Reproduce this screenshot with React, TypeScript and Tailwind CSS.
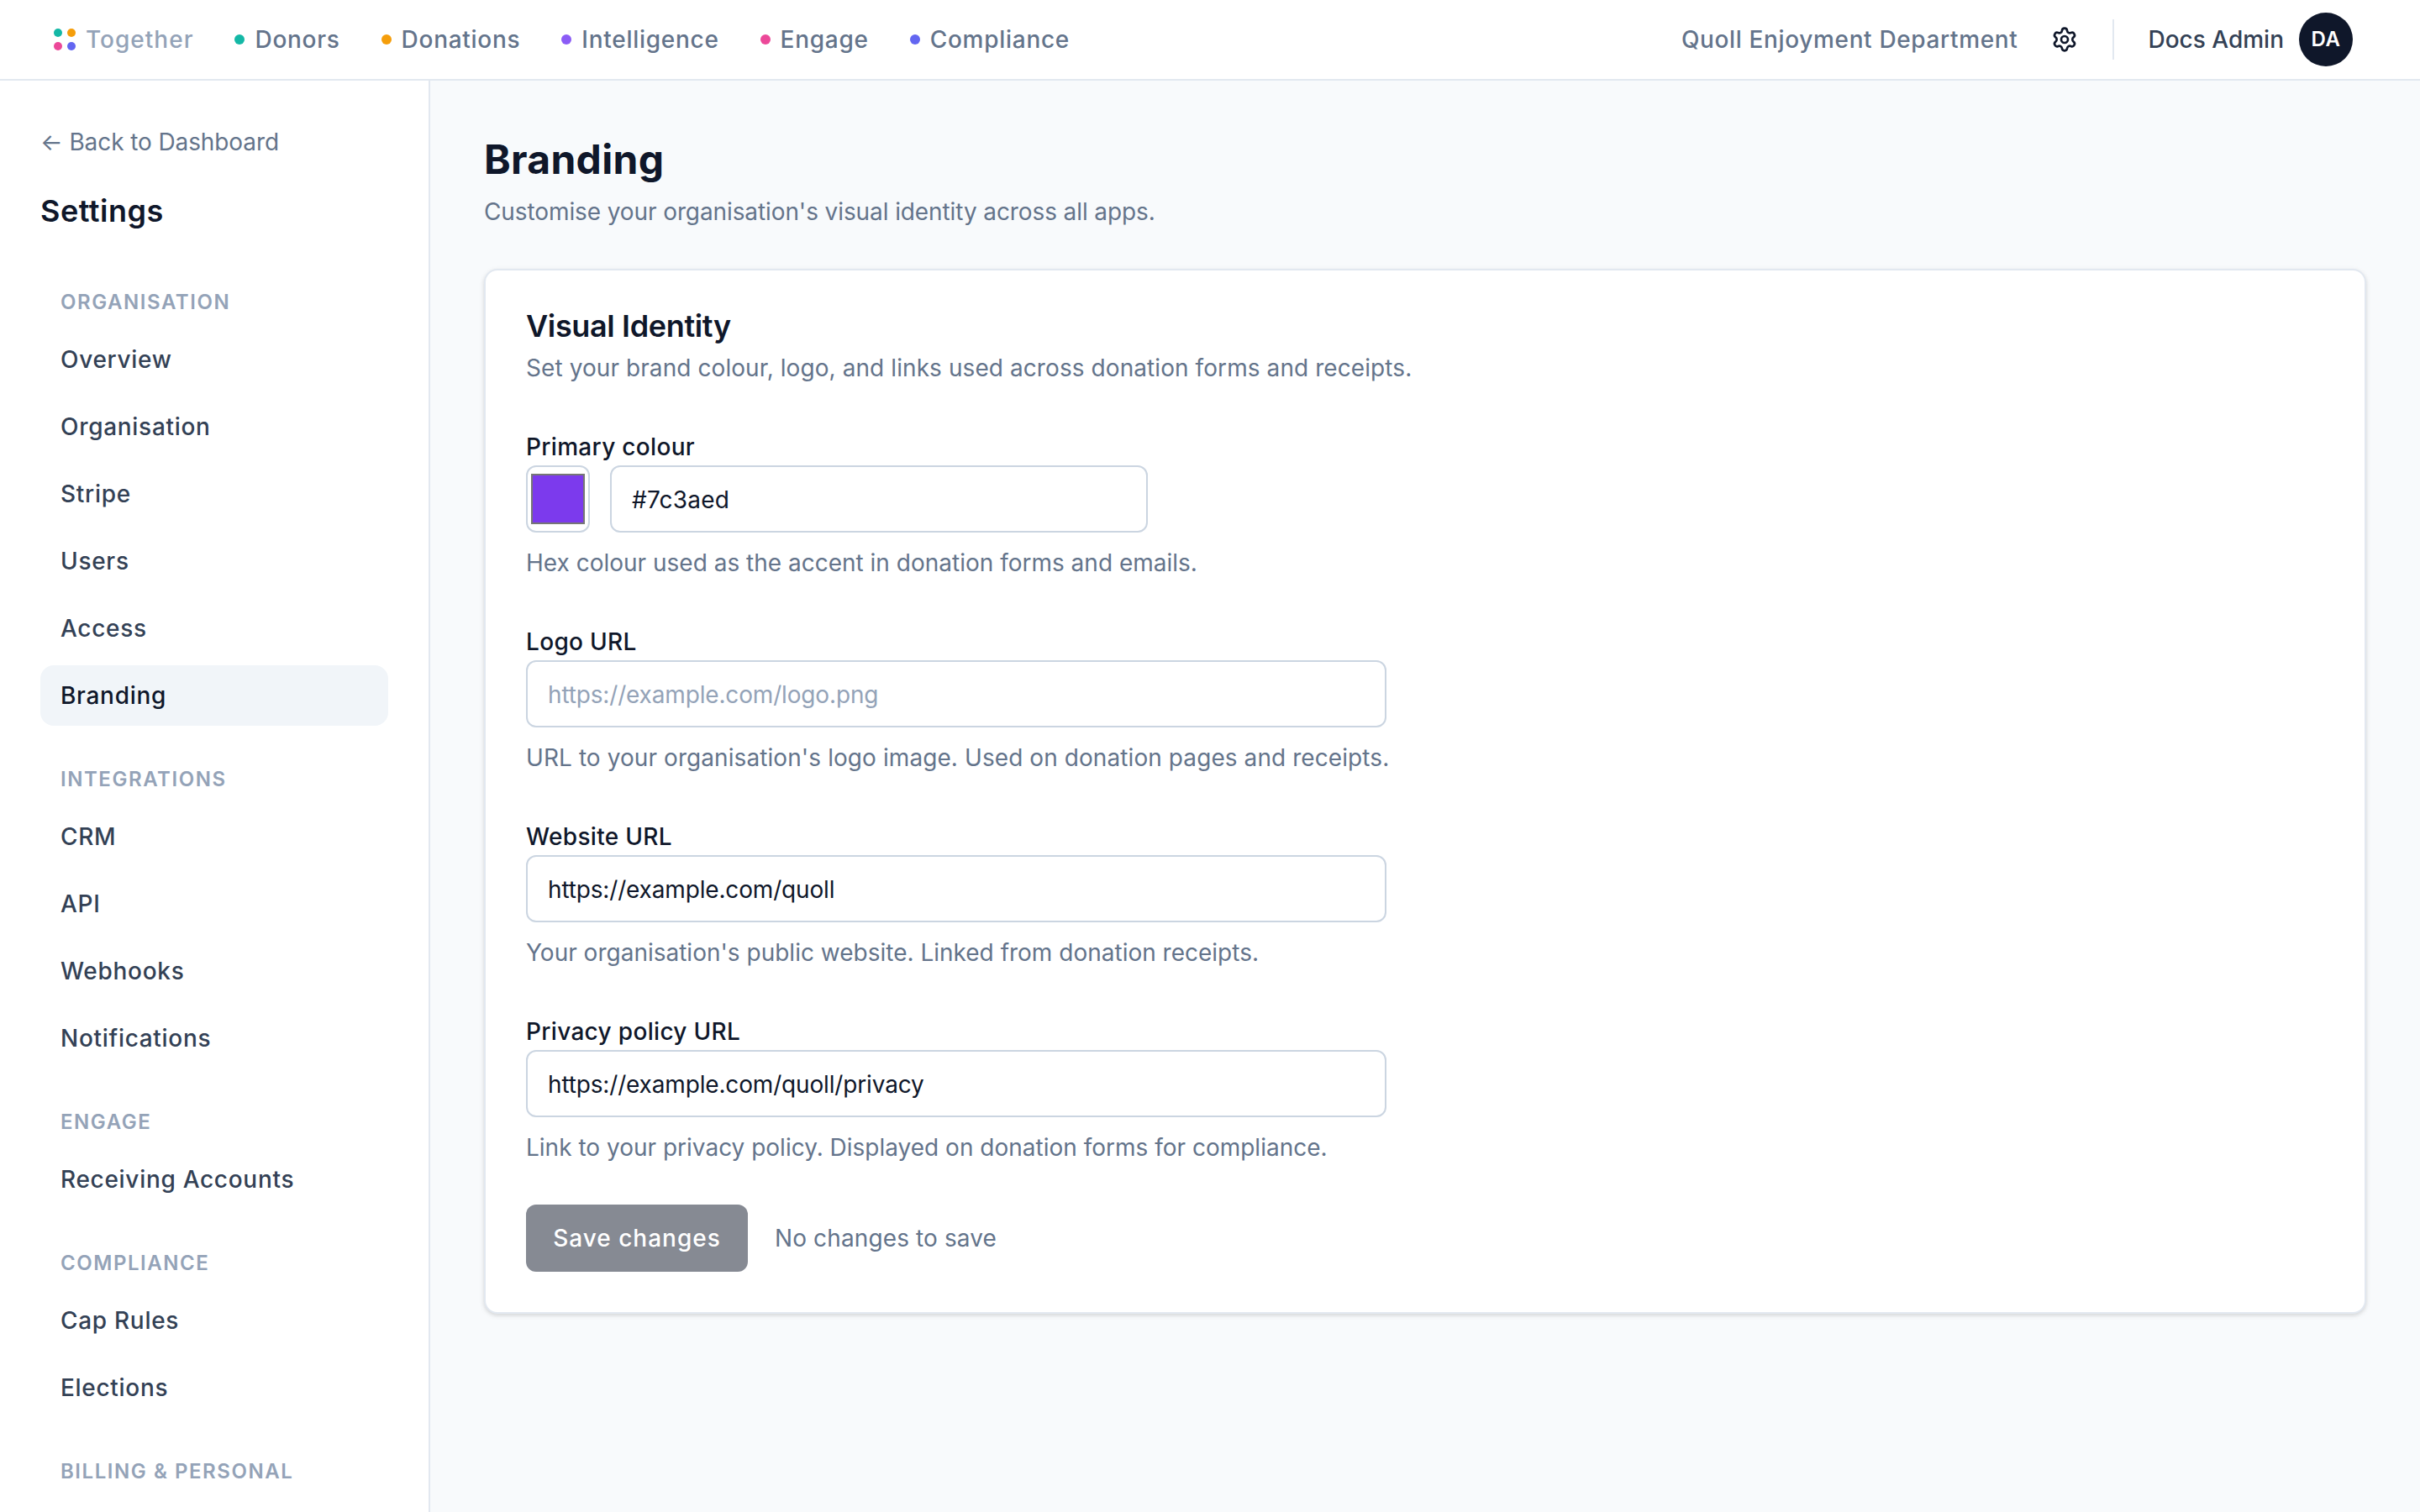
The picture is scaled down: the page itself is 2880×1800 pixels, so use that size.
import { Settings } from "lucide-react";

const apps = [
  { name: "Donors", dot: "bg-[#14b8a6]" },
  { name: "Donations", dot: "bg-[#f59e0b]" },
  { name: "Intelligence", dot: "bg-[#8b5cf6]" },
  { name: "Engage", dot: "bg-[#ec4899]" },
  { name: "Compliance", dot: "bg-[#6366f1]" },
];

const sections = [
  {
    label: "Organisation",
    items: ["Overview", "Organisation", "Stripe", "Users", "Access", "Branding"],
  },
  { label: "Integrations", items: ["CRM", "API", "Webhooks", "Notifications"] },
  { label: "Engage", items: ["Receiving Accounts"] },
  { label: "Compliance", items: ["Cap Rules", "Elections"] },
  { label: "Billing & Personal", items: [] },
];

const fields = [
  {
    label: "Logo URL",
    placeholder: "https://example.com/logo.png",
    value: "",
    help: "URL to your organisation's logo image. Used on donation pages and receipts.",
    helpClass: "tracking-[0.08px]",
  },
  {
    label: "Website URL",
    placeholder: "",
    value: "https://example.com/quoll",
    help: "Your organisation's public website. Linked from donation receipts.",
    helpClass: "",
  },
  {
    label: "Privacy policy URL",
    placeholder: "",
    value: "https://example.com/quoll/privacy",
    help: "Link to your privacy policy. Displayed on donation forms for compliance.",
    helpClass: "",
  },
];

const TopBar = () => (
  <header className="h-[96px] shrink-0 bg-white border-b-2 border-[#e2e8f0] flex items-center justify-between pl-[64px] pr-[80px]">
    <nav className="flex items-center gap-[49px]">
      <div className="flex items-center gap-[12px]">
        <div className="grid grid-cols-2 gap-[6px]">
          <span className="w-[10px] h-[10px] rounded-full bg-[#14b8a6]" />
          <span className="w-[10px] h-[10px] rounded-full bg-[#f59e0b]" />
          <span className="w-[10px] h-[10px] rounded-full bg-[#ec4899]" />
          <span className="w-[10px] h-[10px] rounded-full bg-[#6366f1]" />
        </div>
        <span className="text-[28px] leading-[40px] font-medium tracking-[1px] text-[#94a3b8]">Together</span>
      </div>
      {apps.map((app) => (
        <a key={app.name} className="flex items-center gap-[12px] text-[28px] leading-[40px] font-medium tracking-[0.72px] text-[#64748b]">
          <span className={`w-[12px] h-[12px] rounded-full ${app.dot}`} />
          {app.name}
        </a>
      ))}
    </nav>
    <div className="flex items-center">
      <span className="text-[28px] leading-[40px] font-medium tracking-[0.64px] text-[#64748b]">Quoll Enjoyment Department</span>
      <Settings className="w-[32px] h-[32px] ml-[40px] text-[#0f172a]" />
      <div className="w-[2px] h-[48px] bg-[#e2e8f0] ml-[41px] mr-[40px]" />
      <span className="text-[28px] leading-[40px] font-medium text-[#334155]">Docs Admin</span>
      <div className="w-[64px] h-[64px] ml-[18px] rounded-full bg-[#0f172a] text-white text-[24px] font-semibold tracking-[0.5px] flex items-center justify-center">
        DA
      </div>
    </div>
  </header>
);

const Sidebar = () => (
  <aside className="w-[512px] shrink-0 bg-white border-r-2 border-[#e2e8f0] px-[48px] pt-[53px] overflow-hidden">
    <a className="block text-[28px] leading-[40px] tracking-[-0.1px] text-[#64748b]">← Back to Dashboard</a>
    <h2 className="mt-[34px] text-[36px] leading-[56px] font-semibold tracking-[0.5px] text-[#0f172a]">Settings</h2>
    <div className="pt-[17px]">
      {sections.map((section) => (
        <div key={section.label}>
          <div className="mt-[48px] mb-[16px] px-[24px] text-[24px] leading-[32px] font-semibold uppercase tracking-[1.55px] text-[#94a3b8]">
            {section.label}
          </div>
          <div className="flex flex-col gap-[8px]">
            {section.items.map((item) => (
              <a
                key={item}
                className={`block h-[72px] px-[24px] py-[16px] rounded-[16px] text-[28px] leading-[40px] font-medium tracking-[0.7px] ${
                  item === "Branding" ? "bg-[#f1f5f9] text-[#0f172a]" : "text-[#334155]"
                }`}
              >
                {item}
              </a>
            ))}
          </div>
        </div>
      ))}
    </div>
  </aside>
);

const Label = ({ children }: { children: string }) => (
  <label className="block h-[42px] text-[28px] leading-[40px] font-medium tracking-[0.32px] text-[#0f172a]">{children}</label>
);

const Branding = () => (
  <main className="flex-1 min-w-0 bg-[#f8fafc] px-[64px] pt-[62px]">
    <h1 className="text-[48px] leading-[64px] font-bold tracking-[0.3px] text-[#0f172a]">Branding</h1>
    <p className="mt-[10px] text-[28px] leading-[40px] tracking-[-0.1px] text-[#64748b]">
      Customise your organisation's visual identity across all apps.
    </p>
    <section className="mt-[48px] bg-white border-2 border-[#e2e8f0] rounded-[16px] shadow-[0_2px_6px_rgba(0,0,0,0.1),0_2px_4px_rgba(0,0,0,0.06)] p-[48px]">
      <h3 className="text-[36px] leading-[36px] font-semibold tracking-[-0.36px] text-[#0f172a]">Visual Identity</h3>
      <p className="mt-[12px] text-[28px] leading-[40px] tracking-[0.08px] text-[#64748b]">
        Set your brand colour, logo, and links used across donation forms and receipts.
      </p>
      <div className="mt-[54px] flex flex-col gap-[54px]">
        <div>
          <Label>Primary colour</Label>
          <div className="flex items-center gap-[24px]">
            <div className="w-[76px] h-[80px] border-2 border-[#cbd5e1] rounded-[12px] bg-white flex items-center justify-center">
              <div className="w-[64px] h-[60px] border-2 border-[#767676] bg-[#7c3aed]" />
            </div>
            <input
              readOnly
              value="#7c3aed"
              className="w-[640px] h-[80px] border-2 border-[#cbd5e1] rounded-[12px] bg-white px-[24px] pt-[2px] text-[28px] tracking-[0.2px] text-[#0f172a]"
            />
          </div>
          <p className="mt-[16px] text-[28px] leading-[40px] text-[#64748b]">
            Hex colour used as the accent in donation forms and emails.
          </p>
        </div>
        {fields.map((field) => (
          <div key={field.label}>
            <Label>{field.label}</Label>
            <input
              readOnly
              value={field.value}
              placeholder={field.placeholder}
              className="block w-[1024px] h-[80px] border-2 border-[#cbd5e1] rounded-[12px] bg-white px-[24px] pt-[2px] text-[28px] tracking-[-0.16px] text-[#0f172a] placeholder:text-[#94a3b8]"
            />
            <p className={`mt-[16px] text-[28px] leading-[40px] text-[#64748b] ${field.helpClass}`}>{field.help}</p>
          </div>
        ))}
      </div>
      <div className="mt-[48px] flex items-center gap-[32px]">
        <button className="w-[264px] h-[80px] rounded-[12px] bg-[#0f172a] opacity-50 text-white text-[28px] font-medium tracking-[1px]">
          Save changes
        </button>
        <span className="text-[28px] tracking-[0.12px] text-[#64748b]">No changes to save</span>
      </div>
    </section>
  </main>
);

export default function App() {
  return (
    <div className="h-[1800px] flex flex-col overflow-hidden bg-white font-['Inter',sans-serif]">
      <TopBar />
      <div className="flex flex-1 min-h-0">
        <Sidebar />
        <Branding />
      </div>
    </div>
  );
}
